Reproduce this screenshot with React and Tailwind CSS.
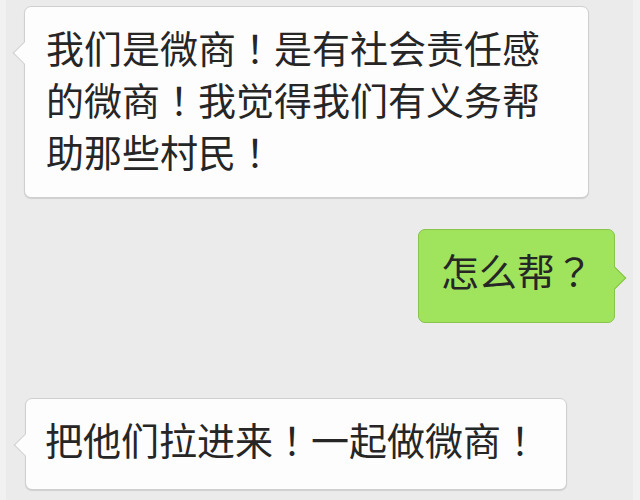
import React from 'react';

const font = { fontFamily: '"Noto Sans CJK SC", "Noto Sans", sans-serif' };

// fullwidth punctuation sits centered in the reference, as in the TC glyphs
function P({ children }) {
  return <span style={{ fontFamily: '"Noto Sans CJK TC", sans-serif' }}>{children}</span>;
}

function LeftBubble({ children, className }) {
  return (
    <div className={`relative self-start bg-[#fdfdfd] border border-[#cfcfcf] rounded-[7px] shadow-[0_1px_1px_rgba(0,0,0,0.12)] ${className}`}>
      <div className="absolute left-[-9px] top-[38px] w-4 h-4 rotate-45 bg-[#fdfdfd] border-l border-b border-[#cfcfcf]"></div>
      {children}
    </div>
  );
}

export default function App() {
  return (
    <div className="w-[640px] h-[500px] overflow-hidden bg-[#ebebeb] border-l-[6px] border-r-[7px] border-[#f1f1f1] flex flex-col text-[#262626] text-[38px] leading-[52px]" style={font}>
      <LeftBubble className="mt-[6px] ml-[18px] w-[565px] h-[192px] pl-[21px] pt-[14px]">
        <p>我们是微商<P>！</P>是有社会责任感<br />的微商<P>！</P>我觉得我们有义务帮<br />助那些村民<P>！</P></p>
      </LeftBubble>

      <div className="relative self-end mt-[31px] mr-[18px] w-[197px] h-[94px] bg-[#a0e35d] border border-[#86c44b] rounded-[7px] pl-[22px] pt-[14px]">
        <div className="absolute right-[-9px] top-[40px] w-4 h-4 rotate-45 bg-[#a0e35d] border-t border-r border-[#86c44b]"></div>
        <p className="relative">怎么帮<P>？</P></p>
      </div>

      <LeftBubble className="mt-[75px] ml-[19px] w-[542px] h-[92px] pl-[19px] pt-[14px]">
        <p>把他们拉进来<P>！</P>一起做微商<P>！</P></p>
      </LeftBubble>
    </div>
  );
}
